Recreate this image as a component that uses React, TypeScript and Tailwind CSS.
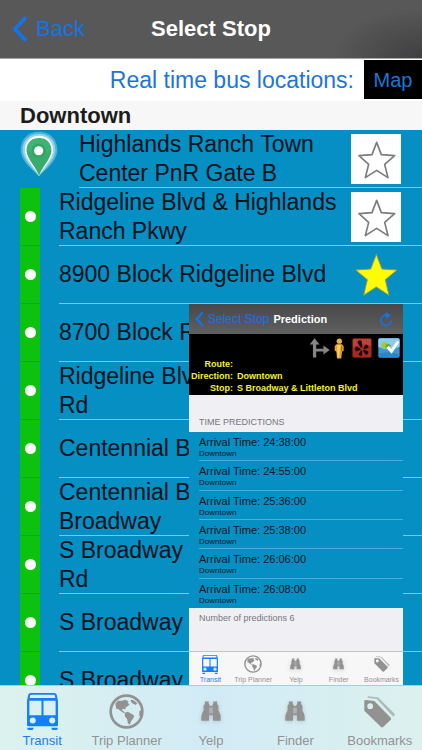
import { useState } from "react";

type IconProps = { className?: string };

interface Stop {
  name: string;
  terminal?: boolean;
  star?: "empty" | "filled";
}

const STOPS: Stop[] = [
  { name: "Highlands Ranch Town\nCenter PnR Gate B", terminal: true, star: "empty" },
  { name: "Ridgeline Blvd & Highlands\nRanch Pkwy", star: "empty" },
  { name: "8900 Block Ridgeline Blvd", star: "filled" },
  { name: "8700 Block R" },
  { name: "Ridgeline Blv\nRd" },
  { name: "Centennial B" },
  { name: "Centennial B\nBroadway" },
  { name: "S Broadway\nRd" },
  { name: "S Broadway" },
  { name: "S Broadway" },
];

const ARRIVALS = ["24:38:00", "24:55:00", "25:36:00", "25:38:00", "26:06:00", "26:08:00"];

function BusIcon({ className }: IconProps) {
  return (
    <svg viewBox="0 0 92 110" className={className} fill="currentColor" aria-hidden="true">
      <path
        fillRule="evenodd"
        d="M12 0H80Q88 0 89 8L92 23V96Q92 99 88 99H4Q0 99 0 96V23L3 8Q4 0 12 0ZM12 5Q9 5 9 8L8 15H84L83 8Q83 5 80 5ZM7 23V66H43V23ZM49 23V66H85V23Z"
      />
      <circle cx="17" cy="82" r="9" fill="#d8eff6" />
      <circle cx="75" cy="82" r="9" fill="#d8eff6" />
      <path d="M1 103H19V106Q19 110 14 110H6Q1 110 1 106ZM73 103H91V106Q91 110 87 110H78Q73 110 73 106Z" />
    </svg>
  );
}

function GlobeIcon({ className }: IconProps) {
  return (
    <svg viewBox="0 0 104 104" className={className} aria-hidden="true">
      <circle cx="52" cy="52" r="47" fill="none" stroke="currentColor" strokeWidth="8" />
      <g fill="currentColor">
        <path d="M19 29L26 20L38 20L49 17L58 22L55 27L61 30L57 36L50 39L48 46L42 44L38 47L44 52L49 56L42 56L34 50L28 45L21 43Z" />
        <path d="M66 17L76 20L84 28L79 33L74 30L68 27L64 21Z" />
        <path d="M47 56L56 53L65 58L75 64L72 73L66 80L62 91L56 87L54 75L47 66Z" />
        <path d="M90 51L97 47L96 64L90 66Z" />
      </g>
    </svg>
  );
}

function BinocularsIcon({ className }: IconProps) {
  return (
    <svg viewBox="0 0 62 64" className={`drop-shadow-sm ${className ?? ""}`} fill="currentColor" aria-hidden="true">
      <path d="M12 1H24V8L28 15H34L38 8V1H50V9L54 14V29L58 37L61 46V61H37V44H25V61H1V46L4 37L8 29V14L12 9Z" />
      <path d="M28 20V38M34 20V38" stroke="#d8eff6" strokeWidth="2" />
    </svg>
  );
}

function TagsIcon({ className }: IconProps) {
  return (
    <svg viewBox="0 0 96 98" className={className} fill="currentColor" aria-hidden="true">
      <path d="M10 5L13 0L44 4L94 54Q97 57 94 60L91 63L86 59L40 9Z" opacity="0.6" />
      <path
        fillRule="evenodd"
        d="M1 15Q1 12 5 12L32 15L82 66Q86 70 82 74L60 95Q56 99 52 95L1 45ZM19 22A9 9 0 1 0 19 40A9 9 0 1 0 19 22Z"
      />
    </svg>
  );
}

function PinIcon() {
  return (
    <svg viewBox="0 0 116 140" className="h-[46px] w-[38px]" aria-hidden="true">
      <path d="M58 138C43 121 2 94 2 57C2 24 25 2 58 2S114 24 114 57C114 94 73 121 58 138Z" fill="#74c3e4" opacity="0.65" />
      <path d="M58 138C48 121 8 91 8 57C8 28 29 8 58 8S108 28 108 57C108 91 68 121 58 138Z" fill="#b5dfef" opacity="0.7" />
      <path d="M58 136C50 116 15 88 15 57C15 31 33 14 58 14S101 31 101 57C101 88 66 116 58 136Z" fill="#fff" />
      <path d="M58 136C52 114 20 84 20 58C20 35 36 21 58 21S96 35 96 58C96 84 64 114 58 136Z" fill="#3eb573" />
      <path d="M58 136C52 114 20 84 20 58L58 74L96 58C96 84 64 114 58 136Z" fill="#35a768" opacity="0.6" />
      <circle cx="57" cy="60" r="22" fill="#33a666" />
      <circle cx="57" cy="60" r="14" fill="#fff" />
    </svg>
  );
}

function StarIcon({ filled }: { filled?: boolean }) {
  return (
    <svg viewBox="0 0 150 150" className="size-[50px]" aria-hidden="true">
      {filled ? (
        <path
          d="M76 13L93 57L138 60L103 89L114 136L76 111L38 136L49 89L14 60L59 57Z"
          fill="#fdfb06"
          stroke="#8f9a52"
          strokeWidth="3"
        />
      ) : (
        <path
          d="M77 25L91 62L131 65L101 91L111 131L77 109L43 131L53 91L24 65L63 62Z"
          fill="#fff"
          stroke="#7c7c7c"
          strokeWidth="5"
          strokeLinejoin="round"
        />
      )}
    </svg>
  );
}

function Chevron({ className }: IconProps) {
  return (
    <svg viewBox="0 0 16 28" className={className} fill="none" aria-hidden="true">
      <path d="M14 2L3 14L14 26" stroke="currentColor" strokeWidth="4" />
    </svg>
  );
}

function RefreshIcon() {
  return (
    <svg viewBox="0 0 42 46" className="h-[15px] w-[14px]" fill="none" aria-hidden="true">
      <path d="M37 26A16 16 0 1 1 25 10" stroke="currentColor" strokeWidth="5" />
      <path d="M20 0L36 10L22 21Z" fill="currentColor" />
    </svg>
  );
}

function RouteIcon() {
  return (
    <svg viewBox="0 0 64 60" className="h-5 w-[21px]" fill="#858585" aria-hidden="true">
      <path d="M17 0L32 19H22V32H44V22L63 36L44 50V41H22V59H12V19H2Z" />
    </svg>
  );
}

function PersonIcon() {
  return (
    <svg viewBox="0 0 30 62" className="h-[21px] w-[10px]" aria-hidden="true">
      <circle cx="16" cy="9" r="8" fill="#f0b040" />
      <path d="M7 18H24L29 24V38L24 41L22 61H9L7 41L2 37V24Z" fill="#e8a02e" />
      <path d="M10 20L20 20L17 38L15 59L11 58L10 40Z" fill="#ffd06a" />
      <path d="M21 23L25 25L24 39L21 39Z" fill="#b36f13" />
    </svg>
  );
}

function YelpIcon() {
  return (
    <svg viewBox="0 0 60 60" className="size-5" aria-hidden="true">
      <rect x="1" y="1" width="58" height="58" rx="6" fill="#a52a22" stroke="#56130f" strokeWidth="2" />
      <path d="M3 6Q3 3 6 3H54Q57 3 57 6V24Q30 14 3 28Z" fill="#bd4238" />
      <g fill="#180504">
        <path d="M18 9Q25 4 29 10L31 28Q27 30 25 26L16 13Z" />
        <path d="M12 25L25 32Q27 35 23 37L11 40Q8 32 12 25Z" />
        <path d="M27 37Q31 36 31 40L30 53Q23 54 19 50Z" />
        <path d="M34 36Q37 34 40 36L50 41Q48 48 42 51L34 40Z" />
        <path d="M35 30L42 19Q48 21 50 29L38 33Q34 33 35 30Z" />
      </g>
    </svg>
  );
}

function CheckMapIcon() {
  return (
    <svg viewBox="0 0 66 60" className="h-5 w-[22px]" aria-hidden="true">
      <rect x="1" y="1" width="64" height="58" rx="5" fill="#3b9ad6" />
      <path d="M1 6Q1 1 6 1H60Q65 1 65 6V26Q34 42 1 27Z" fill="#8accef" />
      <path d="M4 46Q35 38 62 48V54Q62 57 59 57H7Q4 57 4 54Z" fill="#2e84c4" />
      <circle cx="19" cy="22" r="10" fill="#a6ca36" />
      <circle cx="30" cy="25" r="8" fill="#68ac49" />
      <path d="M25 29L33 24L40 33L57 8L64 12L41 47Z" fill="#fff" />
    </svg>
  );
}

const TABS = [
  { label: "Transit", Icon: BusIcon, big: "h-[37px] w-[31px]", small: "h-[19px] w-4" },
  { label: "Trip Planner", Icon: GlobeIcon, big: "size-[35px]", small: "size-[18px]" },
  { label: "Yelp", Icon: BinocularsIcon, big: "h-[21px] w-5", small: "h-[12px] w-[11px]" },
  { label: "Finder", Icon: BinocularsIcon, big: "h-[21px] w-5", small: "h-[12px] w-[11px]" },
  { label: "Bookmarks", Icon: TagsIcon, big: "h-8 w-[31px]", small: "size-4" },
];

function PredictionPanel() {
  return (
    <aside className="absolute right-[19px] bottom-0 flex w-[214px] flex-col bg-[#efeff4]">
      <header className="flex h-[30px] items-center bg-linear-to-b from-[#48484a] to-[#606061] pr-[10px] pl-[6px] text-[#1673e6]">
        <button type="button" className="flex items-center gap-1 text-[12px] leading-4 whitespace-nowrap">
          <Chevron className="h-4 w-[9px]" />
          Select Stop
        </button>
        <h2 className="ml-1 text-[11px] leading-4 font-bold text-white">Prediction</h2>
        <button type="button" aria-label="Refresh" className="ml-auto">
          <RefreshIcon />
        </button>
      </header>

      <div className="h-[61px] bg-black text-[9px] leading-3 font-bold text-[#f5f02c]">
        <div className="flex h-6 items-center justify-end gap-1 pt-1 pr-[3px]">
          <RouteIcon />
          <PersonIcon />
          <span className="ml-1 flex items-center gap-[6px]">
            <YelpIcon />
            <CheckMapIcon />
          </span>
        </div>
        <dl className="grid grid-cols-[44px_1fr] gap-x-1 whitespace-nowrap">
          <dt className="text-right">Route:</dt>
          <dd />
          <dt className="text-right">Direction:</dt>
          <dd>Downtown</dd>
          <dt className="text-right">Stop:</dt>
          <dd>S Broadway &amp; Littleton Blvd</dd>
        </dl>
      </div>

      <h3 className="h-[37px] pt-[21px] pl-[10px] text-[9px] leading-3 text-[#77777b]">TIME PREDICTIONS</h3>

      <ul className="grid h-44 grid-rows-6 bg-[#068fc3] pl-[10px] text-[#04151f]">
        {ARRIVALS.map((time) => (
          <li key={time} className="border-b border-[#48b0d5] pt-1 last:border-b-0">
            <p className="text-[11px] leading-3">Arrival Time: {time}</p>
            <p className="text-[8px] leading-3">Downtown</p>
          </li>
        ))}
      </ul>

      <p className="h-[43px] pt-1 pl-[10px] text-[9px] leading-3 text-[#77777b]">Number of predictions 6</p>

      <nav className="flex h-[34px] border-t border-[#c4c4c8] bg-[#f7f7f8]">
        {TABS.map(({ label, Icon, small }, i) => (
          <button
            key={label}
            type="button"
            className={`flex flex-1 basis-0 flex-col items-center text-[7px] leading-2 whitespace-nowrap ${
              i === 0 ? "text-[#157efb]" : "text-[#929292]"
            }`}
          >
            <span className="flex h-6 items-center">
              <Icon className={small} />
            </span>
            {label}
          </button>
        ))}
      </nav>
    </aside>
  );
}

export default function App() {
  const [active, setActive] = useState("Transit");

  return (
    <div className="flex h-screen flex-col overflow-hidden bg-[#068fc3] font-['Liberation_Sans',Arial,sans-serif] text-black">
      <header className="grid h-[59px] shrink-0 grid-cols-[1fr_auto_1fr] items-center border-b border-[#a5a5a5] bg-[#585858] bg-[radial-gradient(90px_50px_at_100%_100%,#3f3f41_0%,#585858_100%)] px-3">
        <button type="button" className="flex items-center gap-2 text-[22px] leading-7 text-[#1673e6]">
          <Chevron className="h-7 w-4" />
          Back
        </button>
        <h1 className="text-[22px] leading-7 font-bold text-white">Select Stop</h1>
      </header>

      <div className="flex h-[42px] shrink-0 items-start justify-end gap-[10px] bg-white pt-px">
        <span className="text-[23px] leading-10 text-[#1b76d8]">Real time bus locations:</span>
        <button type="button" className="h-[39px] w-[58px] bg-black text-xl text-[#1b76d8]">
          Map
        </button>
      </div>

      <h2 className="h-[29px] shrink-0 bg-[#f7f7f7] pl-5 text-[22px] leading-[30px] font-bold text-[#1c1c1c]">Downtown</h2>

      <main className="relative min-h-0 flex-1">
        <ul className="h-full overflow-hidden">
          {STOPS.map((stop, i) => (
            <li key={i} className="flex h-[58px] pl-5">
              {stop.terminal ? (
                <span className="w-[59px] shrink-0 pt-px">
                  <PinIcon />
                </span>
              ) : (
                <span className="mr-[19px] flex w-5 shrink-0 items-center justify-center border-b border-[#0aa05a] bg-[#0cc20c]">
                  <span className="size-[11px] rounded-full bg-white" />
                </span>
              )}
              <div className="flex min-w-0 flex-1 items-center justify-between border-b border-[#7cc6e0] pr-[21px]">
                <p className="text-[23px] leading-[29px] whitespace-pre text-[#03121b]">{stop.name}</p>
                {stop.star && (
                  <button
                    type="button"
                    aria-label={stop.star === "filled" ? "Remove bookmark" : "Add bookmark"}
                    className={`shrink-0 ${stop.star === "empty" ? "bg-white" : ""}`}
                  >
                    <StarIcon filled={stop.star === "filled"} />
                  </button>
                )}
              </div>
            </li>
          ))}
        </ul>
        <PredictionPanel />
      </main>

      <nav className="flex h-[65px] shrink-0 border-t border-[#a3cfdc] bg-linear-to-r from-[#dcf2ee] via-[#d1ebf6] to-[#dcf1ee]">
        {TABS.map(({ label, Icon, big }) => (
          <button
            key={label}
            type="button"
            onClick={() => setActive(label)}
            className={`flex flex-1 basis-0 flex-col items-center pt-1 text-[13px] leading-4 whitespace-nowrap ${
              active === label ? "text-[#157efb]" : "text-[#929292]"
            }`}
          >
            <span className="flex h-[43px] items-center">
              <Icon className={big} />
            </span>
            {label}
          </button>
        ))}
      </nav>
    </div>
  );
}
